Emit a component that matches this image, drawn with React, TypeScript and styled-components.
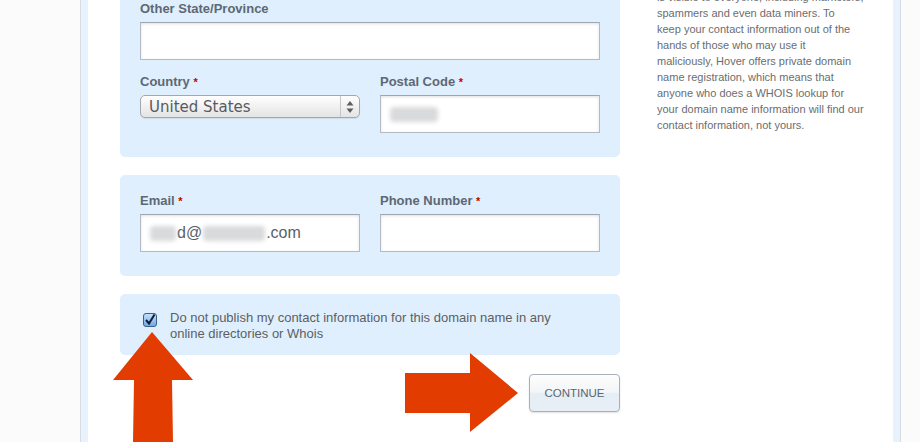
import React from 'react';
import styled, { createGlobalStyle } from 'styled-components';

const GlobalStyle = createGlobalStyle`
  html, body {
    margin: 0;
    padding: 0;
    background: #fbfbfb;
    overflow: hidden;
  }
  * {
    box-sizing: border-box;
  }
`;

const sidebarLines = [
  'is visible to everyone, including marketers,',
  'spammers and even data miners. To',
  'keep your contact information out of the',
  'hands of those who may use it',
  'maliciously, Hover offers private domain',
  'name registration, which means that',
  'anyone who does a WHOIS lookup for',
  'your domain name information will find our',
  'contact information, not yours.',
];

function App() {
  return (
    <>
      <GlobalStyle />
      <St.Page>
        <St.Gutter />
        <St.Column>
          <St.Inner>
            <St.Main>
              <St.Panel $cut>
                <St.Label>Other State/Province</St.Label>
                <St.Input $full />
                <St.FieldRow $spaced>
                  <St.Field>
                    <St.Label>
                      Country <St.Req>*</St.Req>
                    </St.Label>
                    <St.Select>
                      <St.SelectText>United States</St.SelectText>
                      <St.SelectArrows>
                        <svg width="8" height="14" viewBox="0 0 8 14">
                          <path d="M4 1 L7.5 5.5 H0.5 Z" fill="#5d5d5d" />
                          <path d="M4 13 L7.5 8.5 H0.5 Z" fill="#5d5d5d" />
                        </svg>
                      </St.SelectArrows>
                    </St.Select>
                  </St.Field>
                  <St.Field>
                    <St.Label>
                      Postal Code <St.Req>*</St.Req>
                    </St.Label>
                    <St.Input>
                      <St.Blur $w={48} />
                    </St.Input>
                  </St.Field>
                </St.FieldRow>
              </St.Panel>

              <St.Panel $gap>
                <St.FieldRow>
                  <St.Field>
                    <St.Label>
                      Email <St.Req>*</St.Req>
                    </St.Label>
                    <St.Input>
                      <St.Blur $w={26} />
                      <St.InputText>d@</St.InputText>
                      <St.Blur $w={62} />
                      <St.InputText>.com</St.InputText>
                    </St.Input>
                  </St.Field>
                  <St.Field>
                    <St.Label>
                      Phone Number <St.Req>*</St.Req>
                    </St.Label>
                    <St.Input />
                  </St.Field>
                </St.FieldRow>
              </St.Panel>

              <St.Panel $gap $compact>
                <St.CheckRow>
                  <St.CheckBox>
                    <svg width="14" height="14" viewBox="0 0 14 14">
                      <defs>
                        <linearGradient id="cb" x1="0" y1="0" x2="0" y2="1">
                          <stop offset="0" stopColor="#c9e2fb" />
                          <stop offset="1" stopColor="#6fa6e0" />
                        </linearGradient>
                      </defs>
                      <rect x="0.5" y="0.5" width="13" height="13" rx="2.5" fill="url(#cb)" stroke="#3b5f8f" />
                      <path d="M3 7 L6 10.5 L11.5 1.5" fill="none" stroke="#0d1f3c" strokeWidth="2" />
                    </svg>
                  </St.CheckBox>
                  <St.CheckText>
                    Do not publish my contact information for this domain name in any
                    <br />
                    online directories or Whois
                  </St.CheckText>
                </St.CheckRow>
              </St.Panel>

              <St.Actions>
                <St.ContinueButton>CONTINUE</St.ContinueButton>
              </St.Actions>
            </St.Main>

            <St.Sidebar>
              {sidebarLines.map((line) => (
                <St.SideLine key={line}>{line}</St.SideLine>
              ))}
            </St.Sidebar>
          </St.Inner>
        </St.Column>

        {/* annotation arrows drawn over the screenshot */}
        <St.Arrow $left={113} $top={332}>
          <svg width="80" height="110" viewBox="0 0 80 110">
            <polygon points="39,0 80,48 59,48 60,110 20,110 21,48 0,48" fill="#e23c00" />
          </svg>
        </St.Arrow>
        <St.Arrow $left={405} $top={353}>
          <svg width="113" height="80" viewBox="0 0 113 80">
            <polygon points="0,20 65,20 65,0 113,40 65,79 65,60 0,60" fill="#e23c00" />
          </svg>
        </St.Arrow>
      </St.Page>
    </>
  );
}

export default App;

const St = {
  Page: styled.div`
    position: relative;
    display: flex;
    width: 920px;
    height: 442px;
    overflow: hidden;
    font-family: 'Liberation Sans', Arial, sans-serif;
  `,
  Gutter: styled.div`
    width: 80px;
    flex-shrink: 0;
  `,
  Column: styled.div`
    width: 821px;
    flex-shrink: 0;
    border-left: 1px solid #d7dde3;
    border-right: 1px solid #d7dde3;
  `,
  Inner: styled.div`
    display: flex;
    height: 100%;
    background: #fff;
    border-left: 7px solid #e8f2fc;
    border-right: 7px solid #e8f2fc;
    padding-left: 32px;
  `,
  Main: styled.div`
    width: 500px;
    flex-shrink: 0;
  `,
  Panel: styled.div<{ $cut?: boolean; $gap?: boolean; $compact?: boolean }>`
    background: #dfeffd;
    border-radius: ${(p) => (p.$cut ? '0 0 5px 5px' : '5px')};
    margin-top: ${(p) => (p.$gap ? '18px' : '0')};
    padding: ${(p) => (p.$cut ? '1px 20px 24px' : p.$compact ? '16px 20px 13px' : '18px 20px 24px')};
  `,
  FieldRow: styled.div<{ $spaced?: boolean }>`
    display: flex;
    gap: 20px;
    align-items: flex-start;
    margin-top: ${(p) => (p.$spaced ? '14px' : '0')};
  `,
  Field: styled.div`
    width: 220px;
  `,
  Label: styled.div`
    height: 16px;
    line-height: 16px;
    margin-bottom: 5px;
    font-size: 13px;
    font-weight: 700;
    color: #5d6874;
  `,
  Req: styled.span`
    color: #c40000;
    font-size: 11px;
  `,
  Input: styled.div<{ $full?: boolean }>`
    display: flex;
    align-items: center;
    width: ${(p) => (p.$full ? '460px' : '220px')};
    height: 38px;
    padding-left: 8px;
    background: #fff;
    border: 1px solid #b2bbc4;
    border-top-color: #9ea7b0;
    box-shadow: inset 0 1px 3px rgba(0, 0, 0, 0.12);
  `,
  InputText: styled.span`
    font-size: 16px;
    color: #5a5f66;
  `,
  Blur: styled.span<{ $w: number }>`
    display: inline-block;
    width: ${(p) => p.$w}px;
    height: 15px;
    margin: 0 1px;
    background: #d9dadc;
    border-radius: 4px;
    filter: blur(2px);
  `,
  Select: styled.div`
    display: flex;
    align-items: center;
    width: 220px;
    height: 23px;
    margin-top: 4px;
    border: 1px solid #a3a8ad;
    border-radius: 5px;
    background: linear-gradient(#ffffff, #f1f1f1 50%, #e4e4e4);
    box-shadow: 0 1px 1px rgba(0, 0, 0, 0.08);
  `,
  SelectText: styled.span`
    flex: 1;
    padding-left: 8px;
    font-family: 'DejaVu Sans', Verdana, sans-serif;
    font-size: 15px;
    line-height: 20px;
    color: #565b61;
  `,
  SelectArrows: styled.span`
    display: flex;
    align-items: center;
    justify-content: center;
    width: 19px;
    height: 100%;
    border-left: 1px solid #c4c7ca;
  `,
  CheckRow: styled.div`
    display: flex;
    align-items: flex-start;
    gap: 13px;
    padding-left: 3px;
  `,
  CheckBox: styled.span`
    display: flex;
    width: 14px;
    height: 14px;
    margin-top: 3px;
    flex-shrink: 0;
  `,
  CheckText: styled.div`
    font-size: 13px;
    line-height: 16px;
    color: #5c5f63;
  `,
  Actions: styled.div`
    display: flex;
    justify-content: flex-end;
    margin-top: 19px;
  `,
  ContinueButton: styled.button`
    width: 91px;
    height: 38px;
    padding: 0;
    border: 1px solid #a8b1ba;
    border-radius: 4px;
    background: linear-gradient(#fdfdfd 0%, #f3f5f7 48%, #e5edf5 52%, #e7eef6 100%);
    box-shadow: 0 1px 2px rgba(0, 0, 0, 0.12);
    font-family: 'Liberation Sans', Arial, sans-serif;
    font-size: 11.5px;
    color: #5b6570;
    cursor: pointer;
  `,
  Sidebar: styled.div`
    width: 215px;
    margin-left: 37px;
    margin-top: -11px;
  `,
  SideLine: styled.div`
    font-size: 11px;
    line-height: 16px;
    color: #6a6d70;
    white-space: nowrap;
  `,
  Arrow: styled.div<{ $left: number; $top: number }>`
    position: absolute;
    left: ${(p) => p.$left}px;
    top: ${(p) => p.$top}px;
    line-height: 0;
  `,
};
